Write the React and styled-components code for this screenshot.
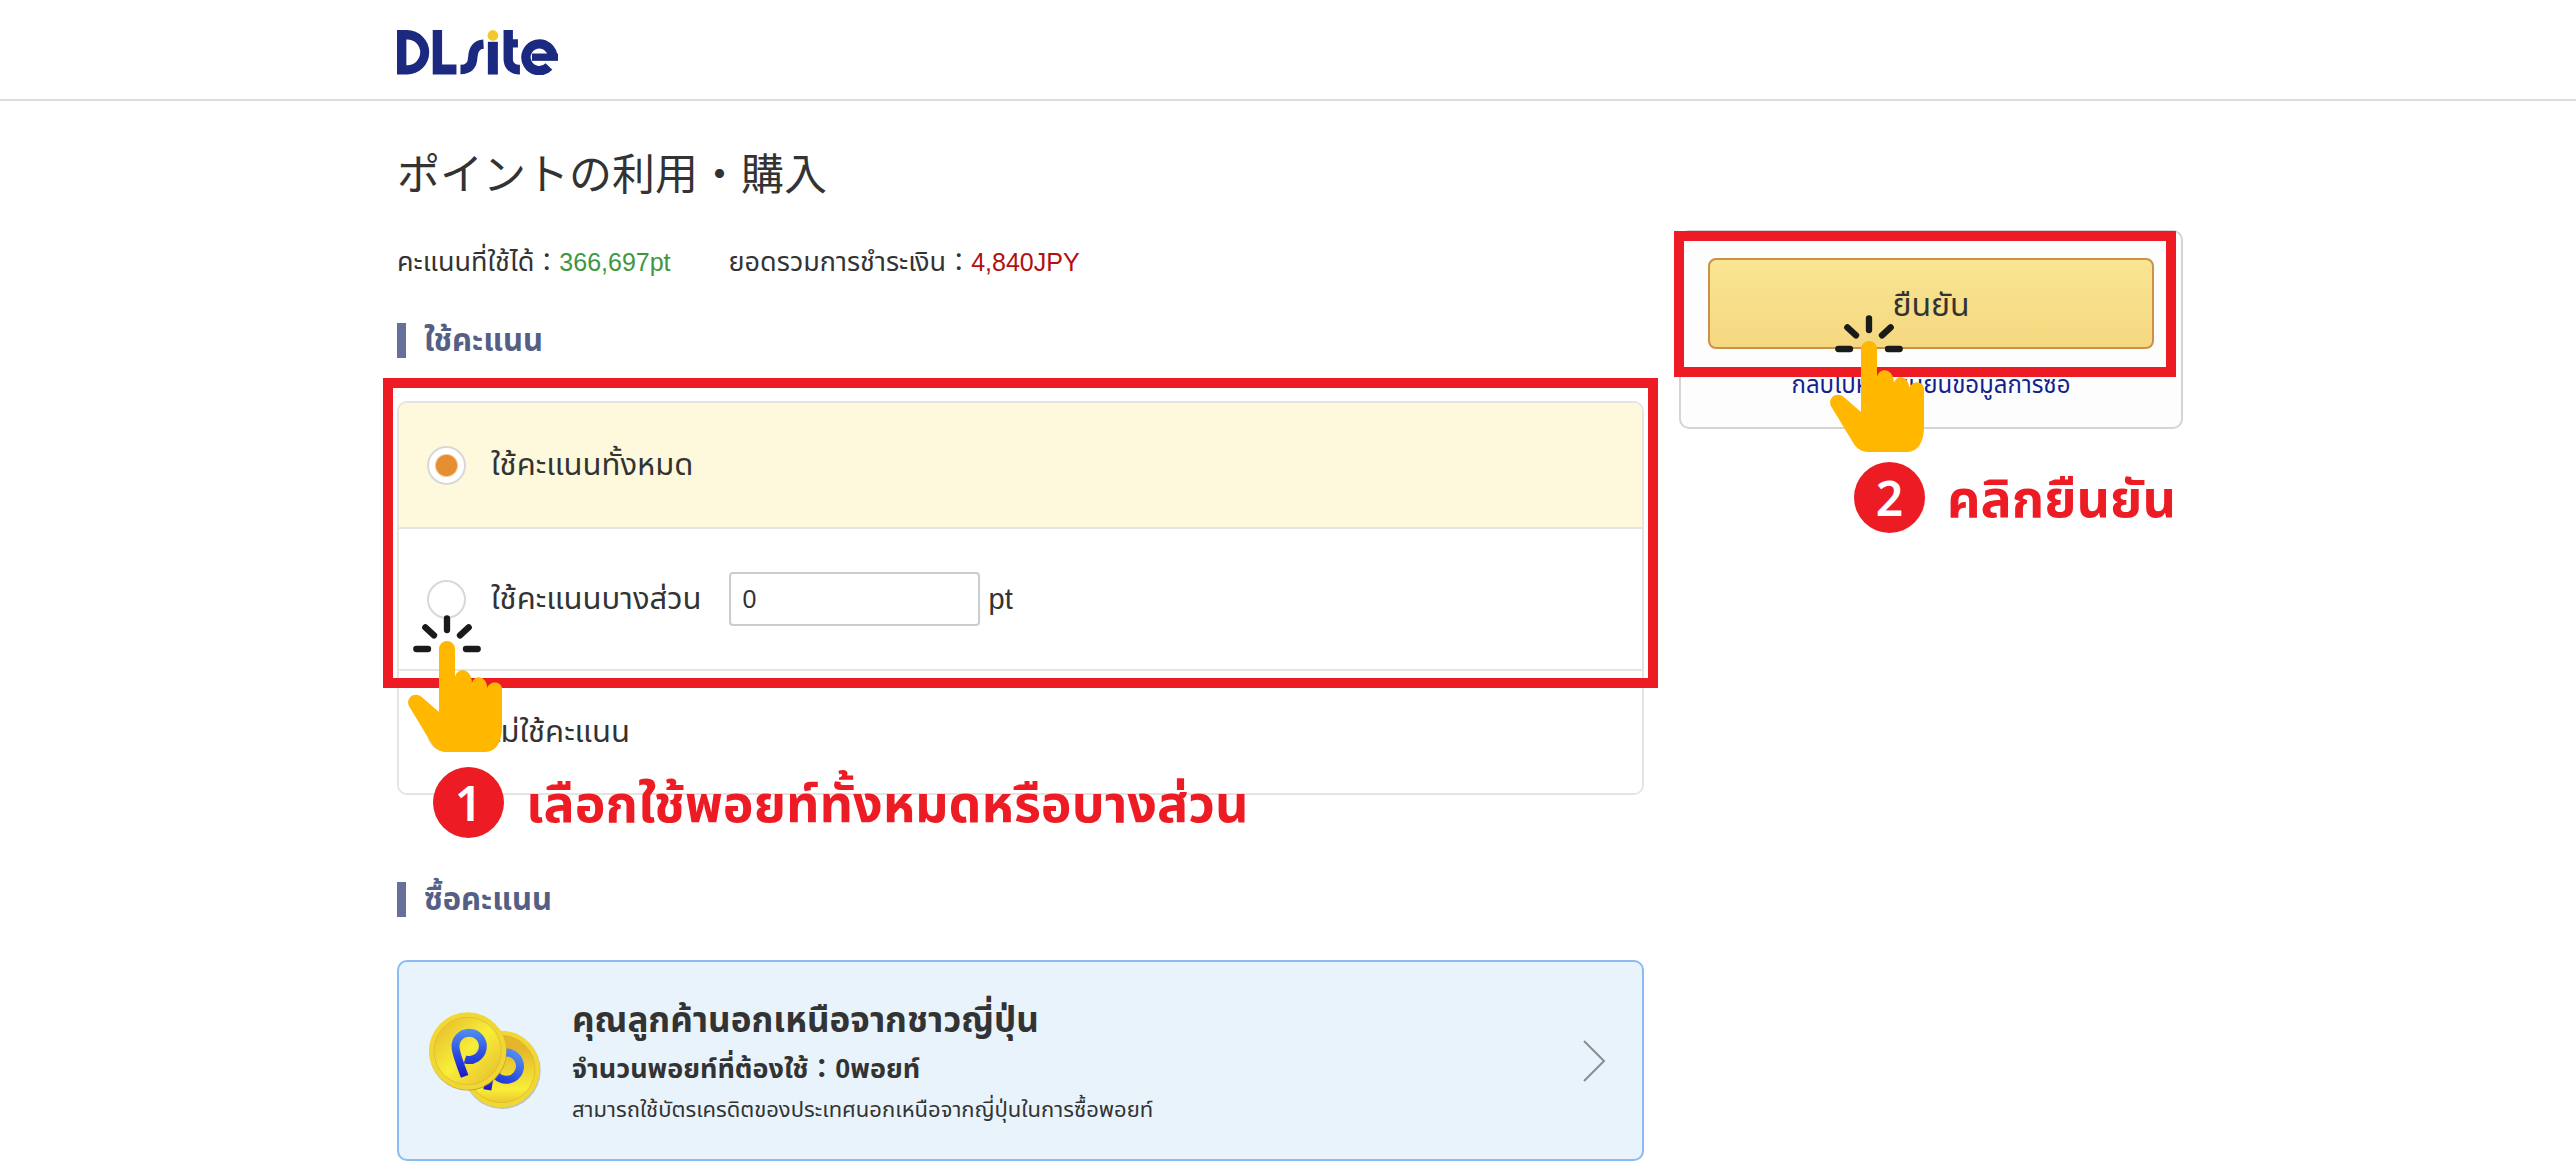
import React, { useState } from 'react'
import styled, { createGlobalStyle } from 'styled-components'


const App = () => {
    const [mode, setMode] = useState('all')
    const [amount, setAmount] = useState('0')

    return (
        <>
            <GlobalStyle />
            <Header>
                <Container>
                    <LogoLink href="#" aria-label="DLsite">
                        <Logo />
                    </LogoLink>
                </Container>
            </Header>

            <Container as="main">
                <PageTitle>ポイントの利用・購入</PageTitle>
                <Columns>
                    <div>
                        <Summary>
                            <div><SummaryLabel>คะแนนที่ใช้ได้</SummaryLabel>：<Amount color="#419641">366,697pt</Amount></div>
                            <div><SummaryLabel>ยอดรวมการชำระเงิน</SummaryLabel>：<Amount color="#b30f0f">4,840JPY</Amount></div>
                        </Summary>

                        <SectionTitle>ใช้คะแนน</SectionTitle>
                        <OptionArea>
                            <Options>
                                <Option active={mode === 'all' ? 1 : 0}>
                                    <Radio id="use-all" name="mode" checked={mode === 'all'} onChange={() => setMode('all')} />
                                    <label htmlFor="use-all">ใช้คะแนนทั้งหมด</label>
                                </Option>
                                <Option active={mode === 'part' ? 1 : 0} tall={1}>
                                    <Radio id="use-part" name="mode" checked={mode === 'part'} onChange={() => setMode('part')} />
                                    <label htmlFor="use-part">ใช้คะแนนบางส่วน</label>
                                    <PointInput
                                        id="points"
                                        value={amount}
                                        onChange={(e) => setAmount(e.target.value)}
                                    />
                                    <Unit htmlFor="points">pt</Unit>
                                </Option>
                                <Option active={mode === 'none' ? 1 : 0}>
                                    <Radio id="use-none" name="mode" checked={mode === 'none'} onChange={() => setMode('none')} />
                                    <label htmlFor="use-none">ไม่ใช้คะแนน</label>
                                </Option>
                            </Options>
                            <OptionsFrame />
                            <OptionsPointer><Hand /></OptionsPointer>
                            <OptionsStep>
                                <StepNumber>1</StepNumber>
                                <StepText>เลือกใช้พอยท์ทั้งหมดหรือบางส่วน</StepText>
                            </OptionsStep>
                        </OptionArea>

                        <SectionTitle>ซื้อคะแนน</SectionTitle>
                        <BuyCard href="#">
                            <Coins />
                            <BuyText>
                                <BuyHeading>คุณลูกค้านอกเหนือจากชาวญี่ปุ่น</BuyHeading>
                                <BuyNeed>จำนวนพอยท์ที่ต้องใช้：0พอยท์</BuyNeed>
                                <BuyNote>สามารถใช้บัตรเครดิตของประเทศนอกเหนือจากญี่ปุ่นในการซื้อพอยท์</BuyNote>
                            </BuyText>
                            <Chevron />
                        </BuyCard>
                    </div>

                    <Side>
                        <ConfirmBox>
                            <ConfirmButton type="button">ยืนยัน</ConfirmButton>
                            <BackLink href="#">กลับไปหน้ายืนยันข้อมูลการซื้อ</BackLink>
                        </ConfirmBox>
                        <ConfirmFrame />
                        <ConfirmPointer><Hand /></ConfirmPointer>
                        <ConfirmStep>
                            <StepNumber>2</StepNumber>
                            <StepText>คลิกยืนยัน</StepText>
                        </ConfirmStep>
                    </Side>
                </Columns>
            </Container>
        </>
    )
}

const Logo = () => (
    <svg width="161" height="45" viewBox="0 0 482 134" fill="#1b2a80">
        <path fillRule="evenodd" d="M0 0H30A66 66 0 0 1 30 133H0ZM28 28V105H31A38 38 0 0 0 31 28Z" />
        <path d="M107 0h28v103h43v30h-71z" />
        <path d="M190 118C215 118 226 104 227 80C228 58 238 43 259 42" fill="none" stroke="#1b2a80" strokeWidth="28" />
        <path d="M272 35h30v98h-30z" />
        <circle cx="287" cy="16" r="16" fill="#f2c931" />
        <path d="M319 0h28v27h15v25h-15v34c0 12 7 18 21 18v29c-30 0-49-18-49-48z" />
        <path d="M466 84A40 40 0 1 0 455 109" fill="none" stroke="#1b2a80" strokeWidth="28" />
        <path d="M404 70h78v22h-78z" />
    </svg>
)

const Hand = () => (
    <svg width="94" height="137" viewBox="0 0 282 411">
        <path
            d="M117 10v35M52 37l26 24M182 37l-26 24M25 102h35M174 102h35"
            fill="none"
            stroke="#1a1a1a"
            strokeWidth="19"
            strokeLinecap="round"
        />
        <path
            fill="#ffb700"
            d="M93 102a24 24 0 0 1 48 0V187C147 156 190 157 192 203C198 178 236 180 238 219C244 196 282 197 282 222V334C282 385 262 411 232 411H113C95 411 80 400 70 384L5 277C-11 252 18 226 41 246L93 291Z"
        />
    </svg>
)

const Coins = () => (
    <CoinsIcon width="112" height="98" viewBox="0 0 336 294">
        <defs>
            <linearGradient id="gold" x1="0" y1="0" x2="1" y2="1">
                <stop offset="0" stopColor="#e5b52c" />
                <stop offset="0.5" stopColor="#f8ee38" />
                <stop offset="1" stopColor="#e6b92e" />
            </linearGradient>
            <linearGradient id="goldBack" x1="0" y1="0" x2="0" y2="1">
                <stop offset="0.2" stopColor="#e5b52c" />
                <stop offset="0.8" stopColor="#f8ee38" />
                <stop offset="1" stopColor="#ecc72e" />
            </linearGradient>
            <linearGradient id="blue" gradientUnits="userSpaceOnUse" x1="100" y1="50" x2="100" y2="196">
                <stop offset="0" stopColor="#5290ef" />
                <stop offset="0.6" stopColor="#2a45dc" />
                <stop offset="1" stopColor="#1a17c4" />
            </linearGradient>
        </defs>
        <circle cx="219" cy="175" r="116" fill="#a9a58a" opacity="0.6" />
        <circle cx="217" cy="171" r="115" fill="#f0d733" />
        <circle cx="217" cy="171" r="101" fill="url(#goldBack)" stroke="#d9b32c" strokeWidth="2" />
        <path
            d="M108 142A41 41 0 1 0 80 109Q82 128 107 193"
            fill="none"
            stroke="url(#blue)"
            strokeWidth="24"
            transform="translate(111 59) rotate(30 120 104)"
        />
        <circle cx="117" cy="120" r="116" fill="#b08e20" opacity="0.7" />
        <circle cx="116" cy="117" r="116" fill="#f0d733" />
        <circle cx="116" cy="117" r="101" fill="url(#gold)" stroke="#d9b32c" strokeWidth="2" />
        <path d="M108 142A41 41 0 1 0 80 109Q82 128 107 193" fill="none" stroke="url(#blue)" strokeWidth="24" />
    </CoinsIcon>
)

const Chevron = () => (
    <svg width="24" height="42" viewBox="0 0 24 42" fill="none" stroke="#8a8d90" strokeWidth="2">
        <path d="M2 1l20 20l-20 20" />
    </svg>
)


const GlobalStyle = createGlobalStyle`
    * {
        box-sizing: border-box;
    }

    body {
        margin: 0;
        background: #fff;
        color: #333;
        font-family: "Liberation Sans", "Noto Sans Thai", "Noto Sans", "Noto Sans CJK JP", sans-serif;
        font-size: 31px;
    }
`

const Container = styled.div`
    max-width: 1790px;
    margin: 0 auto;
    padding-left: 4px;
`

const Header = styled.header`
    padding: 30px 0 24px;
    border-bottom: 2px solid #dcdcdc;
`

const LogoLink = styled.a`
    display: block;
    width: 161px;
    height: 45px;
`

const PageTitle = styled.h1`
    margin: 38px 0 27px;
    font-family: "Noto Sans CJK JP", sans-serif;
    font-size: 43px;
    font-weight: 400;
    line-height: 64px;
`

const Columns = styled.div`
    display: grid;
    grid-template-columns: minmax(0, 1fr) 504px;
    align-items: start;
    gap: 35px;
`

const Summary = styled.div`
    display: flex;
    gap: 58px;
    padding-top: 12px;
    font-size: 25px;
    line-height: 40px;
`

const SummaryLabel = styled.span`
    font-size: 27px;
`

const Amount = styled.span`
    color: ${props => props.color};
`

const SectionTitle = styled.h2`
    margin: 41px 0 43px;
    padding-left: 18px;
    border-left: 9px solid #66709a;
    color: #555f85;
    font-size: 31px;
    line-height: 35px;
`

const OptionArea = styled.div`
    position: relative;
    margin-bottom: 87px;
`

const Options = styled.div`
    border: 2px solid #e4e4e4;
    border-radius: 10px;
    overflow: hidden;
`

const Option = styled.div`
    display: flex;
    align-items: center;
    height: ${props => props.tall ? '142px' : '124px'};
    padding-left: 28px;
    background: ${props => props.active ? '#fef9dc' : '#fff'};
    line-height: 40px;

    & + & {
        border-top: 2px solid #e4e4e4;
    }
`

const Radio = styled.input.attrs({ type: 'radio' })`
    appearance: none;
    width: 39px;
    height: 39px;
    margin: 0 25px 0 0;
    border: 2px solid #d8d8d8;
    border-radius: 50%;
    background: #fff;

    &:checked {
        background: radial-gradient(circle, #e68e32 10px, #fff 12px);
    }
`

const PointInput = styled.input.attrs({ type: 'text' })`
    width: 251px;
    height: 54px;
    margin: 0 9px 0 27px;
    padding: 0 12px;
    border: 2px solid #ccc;
    border-radius: 4px;
    color: #333;
    font-family: inherit;
    font-size: 25px;
`

const Unit = styled.label`
    font-size: 29px;
`

const BuyCard = styled.a`
    display: flex;
    align-items: center;
    height: 201px;
    padding: 0 36px 0 30px;
    border: 2px solid #8abcf2;
    border-radius: 10px;
    background: #e8f3fc;
    color: #333;
    text-decoration: none;
`

const CoinsIcon = styled.svg`
    flex: none;
`

const BuyText = styled.div`
    flex: 1;
    padding-left: 31px;
`

const BuyHeading = styled.h3`
    margin: 0;
    font-size: 35px;
    line-height: 52px;
`

const BuyNeed = styled.p`
    margin: 0;
    font-size: 27px;
    font-weight: 700;
    line-height: 46px;
`

const BuyNote = styled.p`
    margin: 0;
    font-size: 22px;
    line-height: 36px;
`

const Side = styled.aside`
    position: relative;
`

const ConfirmBox = styled.div`
    display: flex;
    flex-direction: column;
    align-items: center;
    padding: 26px;
    border: 2px solid #d4d4d4;
    border-radius: 10px;
    background: #fdfdfd;
`

const ConfirmButton = styled.button`
    width: 446px;
    height: 91px;
    padding: 4px 0 0;
    border: 2px solid #cc9148;
    border-radius: 8px;
    background: linear-gradient(#f9e592, #f5d880);
    color: #333;
    font-family: inherit;
    font-size: 32px;
    cursor: pointer;
`

const BackLink = styled.a`
    margin-top: 20px;
    color: #12228c;
    font-size: 24px;
    line-height: 32px;
    text-decoration: none;
`

// red guide marks laid over the form
const Frame = styled.div`
    position: absolute;
    border: 10px solid #ed1c24;
    pointer-events: none;
`

const OptionsFrame = styled(Frame)`
    top: -23px;
    right: -14px;
    left: -14px;
    height: 310px;
`

const ConfirmFrame = styled(Frame)`
    top: 1px;
    right: 7px;
    left: -5px;
    height: 146px;
`

const Pointer = styled.div`
    position: absolute;
    display: flex;
    pointer-events: none;
`

const OptionsPointer = styled(Pointer)`
    top: 214px;
    left: 11px;
`

const ConfirmPointer = styled(Pointer)`
    top: 85px;
    left: 151px;
`

const Step = styled.div`
    position: absolute;
    display: flex;
    gap: 22px;
    color: #ed1c24;
    font-family: "Noto Sans Thai", "Noto Sans", "Noto Sans CJK JP", sans-serif;
    font-weight: 700;
    line-height: 71px;
    white-space: nowrap;
`

const OptionsStep = styled(Step)`
    top: 366px;
    left: 36px;
`

const ConfirmStep = styled(Step)`
    top: 232px;
    left: 175px;
`

const StepNumber = styled.span`
    width: 71px;
    height: 71px;
    border-radius: 50%;
    background: #ed1c24;
    color: #fff;
    font-family: "Noto Sans", sans-serif;
    font-size: 48px;
    font-weight: 600;
    text-align: center;
`

const StepText = styled.span`
    padding-top: 4px;
    font-size: 52px;
`


export default App
